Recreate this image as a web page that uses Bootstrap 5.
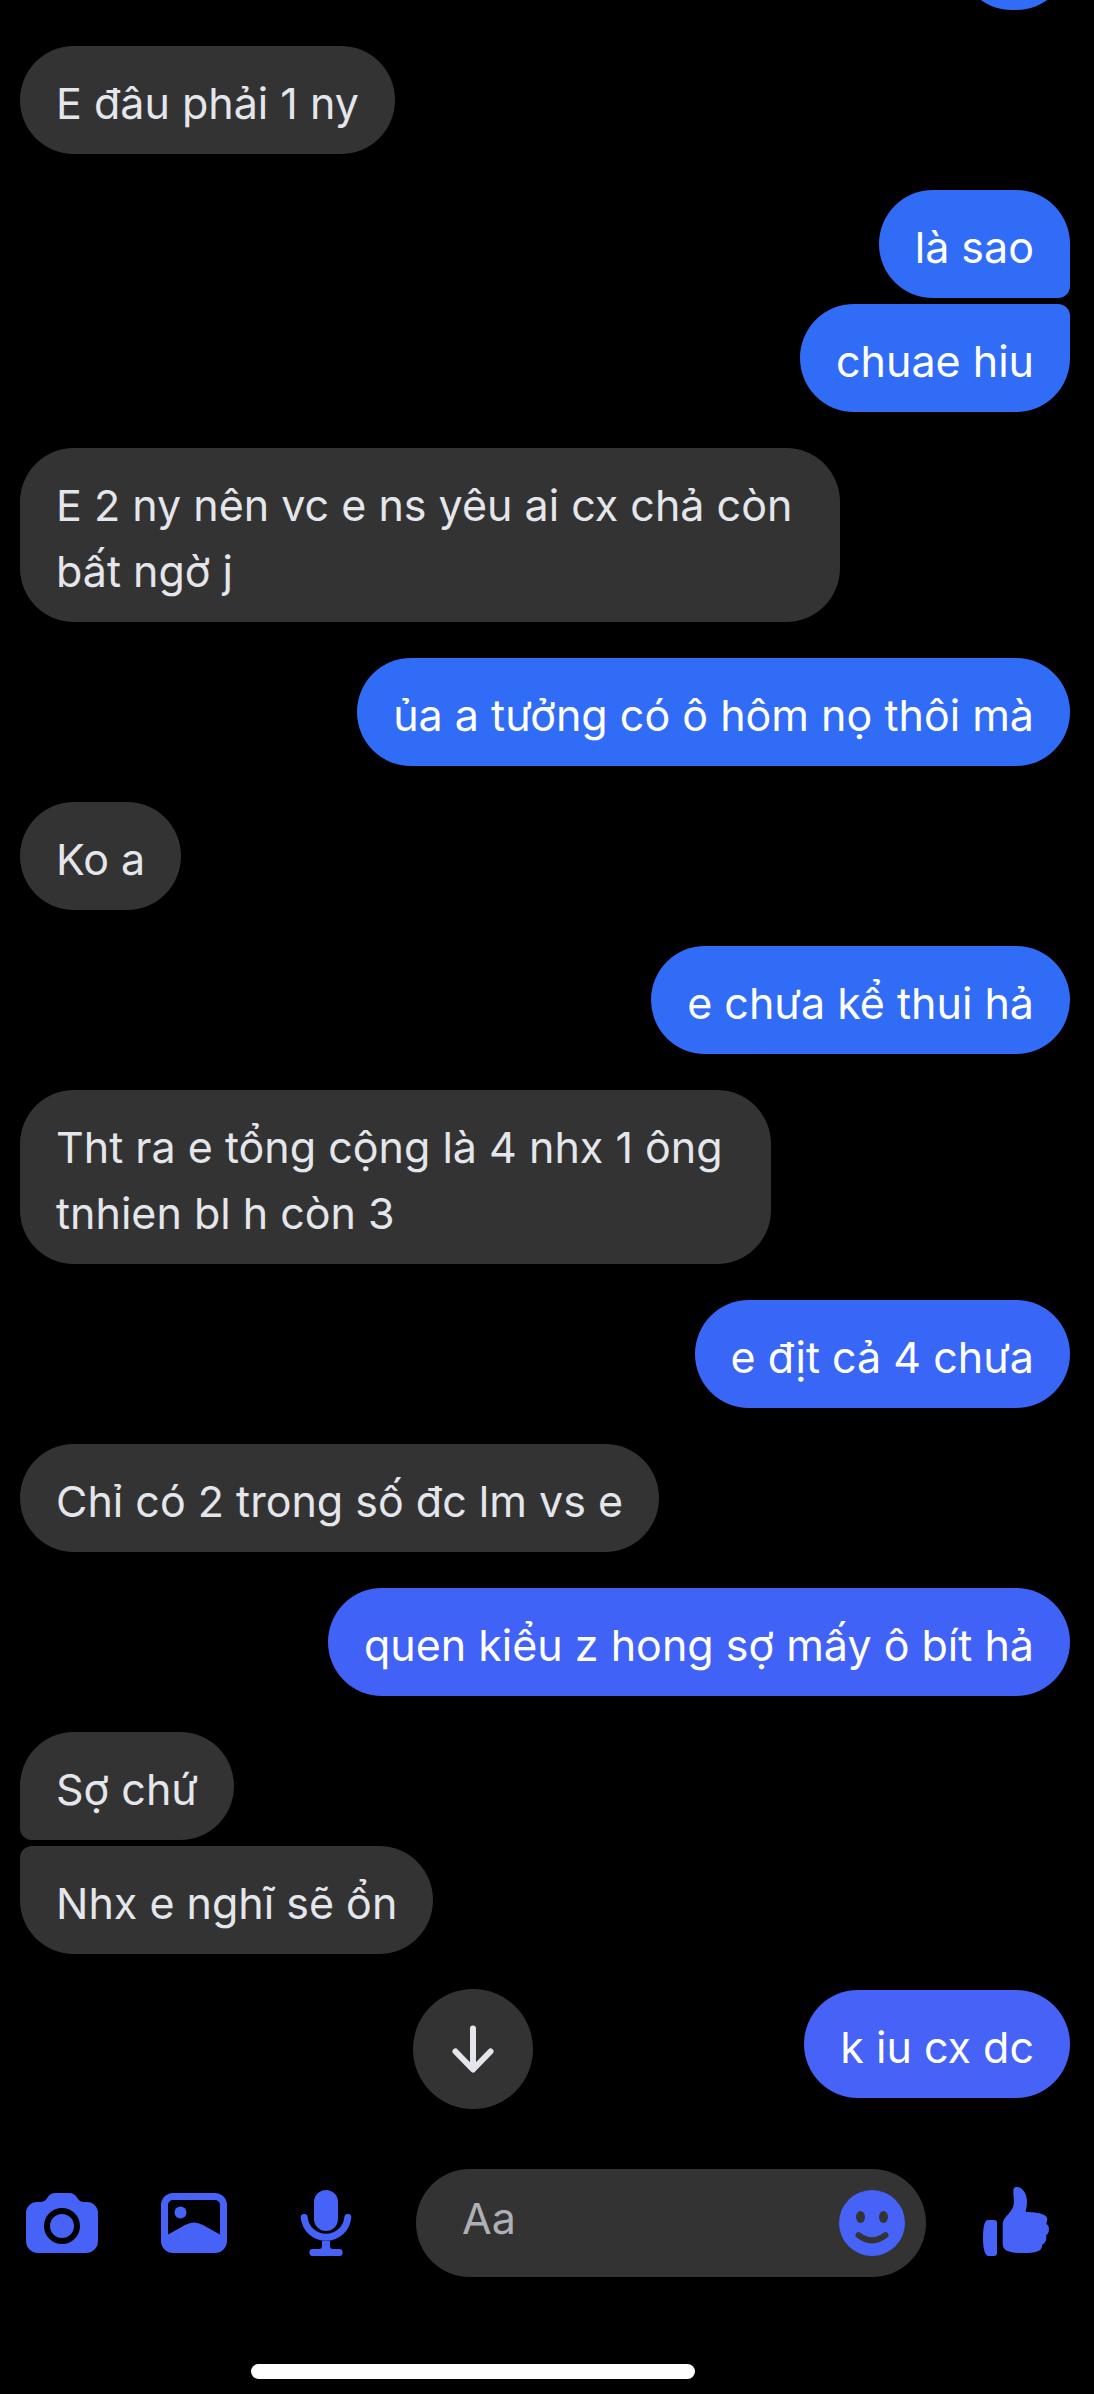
<!DOCTYPE html>
<html lang="vi">
<head>
<meta charset="utf-8">
<meta name="viewport" content="width=device-width, initial-scale=1">
<title>Chat</title>
<link href="https://cdn.jsdelivr.net/npm/bootstrap@5.3.0/dist/css/bootstrap.min.css" rel="stylesheet">
<style>
  body { background: #000; color: #e4e6eb; font-family: Inter, "Noto Sans", sans-serif; font-size: 43px; line-height: 66px; }
  .chat-log { padding: 0 24px 0 20px; gap: 36px; }
  .msg-group { gap: 6px; }
  .bubble { padding: 24px 36px 18px; border-radius: 54px; background: #333; max-width: 80%; }
  .bubble-lines { padding-right: 48px; }
  .sent .bubble {
    color: #fff;
    background: linear-gradient(#316cf7 0%, #316cf7 43%, #3966f7 57%, #4162f7 69%, #4662f7 80%) fixed;
  }
  .sent .bubble:not(:last-child) { border-bottom-right-radius: 12px; }
  .sent .bubble:not(:first-child) { border-top-right-radius: 12px; }
  .received .bubble:not(:last-child) { border-bottom-left-radius: 12px; }
  .received .bubble:not(:first-child) { border-top-left-radius: 12px; }
  .scrolled-off { height: 10px; }
  .scrolled-off .bubble { width: 112px; height: 108px; }
  .scroll-layer { bottom: -11px; left: 0; right: 148px; pointer-events: none; }
  .btn-scroll { width: 120px; height: 120px; background: #333; color: #e4e6eb; pointer-events: auto; }
  .btn-scroll:hover { background: #444; color: #fff; }
  .composer { margin-top: 71px; padding: 0 42px 0 26px; gap: 54px; }
  .composer-tools { gap: 60px; }
  .icon-btn, .icon-btn:hover { color: #4662f7; border: 0; line-height: 1; }
  .field-wrap { background: #333; height: 108px; padding: 0 21px 0 46px; }
  .field-text, .field-text:focus { background: none; color: #e4e6eb; border: 0; box-shadow: none; font-size: 43px; line-height: 66px; padding: 0 0 10px; }
  .field-text::placeholder { color: #afb0b5; opacity: 1; }
  .home-area { padding: 87px 148px 15px 0; }
  .home-bar { width: 444px; height: 15px; background: #fff; }
</style>
</head>
<body>
<main class="d-flex flex-column min-vh-100">
  <section class="chat-log d-flex flex-column position-relative" aria-label="Tin nhắn">
    <div class="msg-group sent scrolled-off d-flex flex-column align-items-end justify-content-end overflow-hidden"><div class="bubble flex-shrink-0"></div></div>
    <div class="msg-group received d-flex flex-column align-items-start"><div class="bubble">E đâu phải 1 ny</div></div>
    <div class="msg-group sent d-flex flex-column align-items-end"><div class="bubble">là sao</div><div class="bubble">chuae hiu</div></div>
    <div class="msg-group received d-flex flex-column align-items-start"><div class="bubble bubble-lines">E 2 ny nên vc e ns yêu ai cx chả còn<br>bất ngờ j</div></div>
    <div class="msg-group sent d-flex flex-column align-items-end"><div class="bubble">ủa a tưởng có ô hôm nọ thôi mà</div></div>
    <div class="msg-group received d-flex flex-column align-items-start"><div class="bubble">Ko a</div></div>
    <div class="msg-group sent d-flex flex-column align-items-end"><div class="bubble">e chưa kể thui hả</div></div>
    <div class="msg-group received d-flex flex-column align-items-start"><div class="bubble bubble-lines">Tht ra e tổng cộng là 4 nhx 1 ông<br>tnhien bl h còn 3</div></div>
    <div class="msg-group sent d-flex flex-column align-items-end"><div class="bubble">e địt cả 4 chưa</div></div>
    <div class="msg-group received d-flex flex-column align-items-start"><div class="bubble">Chỉ có 2 trong số đc lm vs e</div></div>
    <div class="msg-group sent d-flex flex-column align-items-end"><div class="bubble">quen kiểu z hong sợ mấy ô bít hả</div></div>
    <div class="msg-group received d-flex flex-column align-items-start"><div class="bubble">Sợ chứ</div><div class="bubble">Nhx e nghĩ sẽ ổn</div></div>
    <div class="msg-group sent d-flex flex-column align-items-end"><div class="bubble">k iu cx dc</div></div>
    <!-- Floating button over the log -->
    <div class="scroll-layer position-absolute d-flex justify-content-center">
      <button type="button" class="btn btn-scroll rounded-circle border-0 p-0 d-flex" aria-label="Cuộn xuống">
        <svg width="120" height="120" viewBox="0 0 120 120" fill="none" stroke="currentColor" stroke-width="6" stroke-linecap="round" stroke-linejoin="round"><path d="M60 39.500V80M42.500 62.500L60 80.500L77.500 62.500"/></svg>
      </button>
    </div>
  </section>

  <form class="composer d-flex align-items-center">
    <div class="composer-tools d-flex">
      <button type="button" class="btn icon-btn p-0 d-flex" aria-label="Máy ảnh">
        <svg width="72" height="72" viewBox="0 0 72 72" fill="currentColor"><path fill-rule="evenodd" d="M11 15H14C18 15 19.500 13.500 21.500 10.500C23.500 7.500 25.500 6 29.500 6H43C47 6 49 7.500 51 10.500C53 13.500 54.500 15 58.500 15H61A11 11 0 0 1 72 26V54A12 12 0 0 1 60 66H12A12 12 0 0 1 0 54V26A11 11 0 0 1 11 15ZM36 21A18 18 0 1 0 36 57A18 18 0 1 0 36 21Z"/><circle cx="36" cy="39" r="12"/></svg>
      </button>
      <button type="button" class="btn icon-btn p-0 d-flex" aria-label="Ảnh">
        <svg width="72" height="72" viewBox="0 0 72 72" fill="currentColor"><path fill-rule="evenodd" d="M15 6H57A12 12 0 0 1 69 18V54A12 12 0 0 1 57 66H15A12 12 0 0 1 3 54V18A12 12 0 0 1 15 6ZM15 13A5 5 0 0 0 10 18V47.500L27 38Q36 33 45 38L62 47.500V18A5 5 0 0 0 57 13Z"/><circle cx="22.500" cy="25.500" r="6"/></svg>
      </button>
      <button type="button" class="btn icon-btn p-0 d-flex" aria-label="Ghi âm">
        <svg width="72" height="72" viewBox="0 0 72 72" fill="currentColor"><rect x="24" y="3" width="24" height="41" rx="12"/><path d="M14.200 30.500A21.900 21.900 0 0 0 57.800 30.500" fill="none" stroke="currentColor" stroke-width="7" stroke-linecap="round"/><path d="M32 54H40V59Q40 62 43 62H49.500A3 3 0 0 1 52.500 65V66A3 3 0 0 1 49.500 69H22.500A3 3 0 0 1 19.500 66V65A3 3 0 0 1 22.500 62H29Q32 62 32 59Z"/></svg>
      </button>
    </div>
    <div class="field-wrap d-flex align-items-center flex-grow-1 rounded-pill">
      <input type="text" class="form-control field-text" placeholder="Aa" aria-label="Tin nhắn mới">
      <button type="button" class="btn icon-btn p-0 d-flex" aria-label="Biểu tượng cảm xúc">
        <svg width="66" height="66" viewBox="0 0 66 66"><circle cx="33" cy="33" r="33" fill="currentColor"/><g fill="#333"><ellipse cx="21.500" cy="27" rx="4.500" ry="6"/><ellipse cx="44.500" cy="27" rx="4.500" ry="6"/></g><path d="M19.500 45.200Q33 55.500 46.500 45.200" fill="none" stroke="#333" stroke-width="6" stroke-linecap="round"/></svg>
      </button>
    </div>
    <button type="button" class="btn icon-btn p-0 d-flex" aria-label="Thích">
      <svg width="72" height="72" viewBox="0 0 72 72" fill="currentColor"><path d="M8 33H14Q17 33 17 36V66Q17 69 14 69H8.500C5 69 3 62 3 51C3 40 4.500 33 8 33Z"/><path d="M22.700 38C22.700 31 27.500 29 31.500 23C35.500 17 33.300 11 33.300 4Q33.300 0 36.500 0C43 0 47 7 47 15C47 19 46 22 45.800 25C54 25 67 26 67.300 32Q67.300 34.500 66.300 36.500Q69 38.500 69 42Q69 46.500 66 48.500Q67.500 54.500 62 58C62.500 64 56 66 43 66C31 66 22.700 64.500 22.700 57Z"/></svg>
    </button>
  </form>

  <div class="home-area d-flex justify-content-center"><div class="home-bar rounded-pill"></div></div>
</main>
<script src="https://cdn.jsdelivr.net/npm/bootstrap@5.3.0/dist/js/bootstrap.bundle.min.js"></script>
</body>
</html>
